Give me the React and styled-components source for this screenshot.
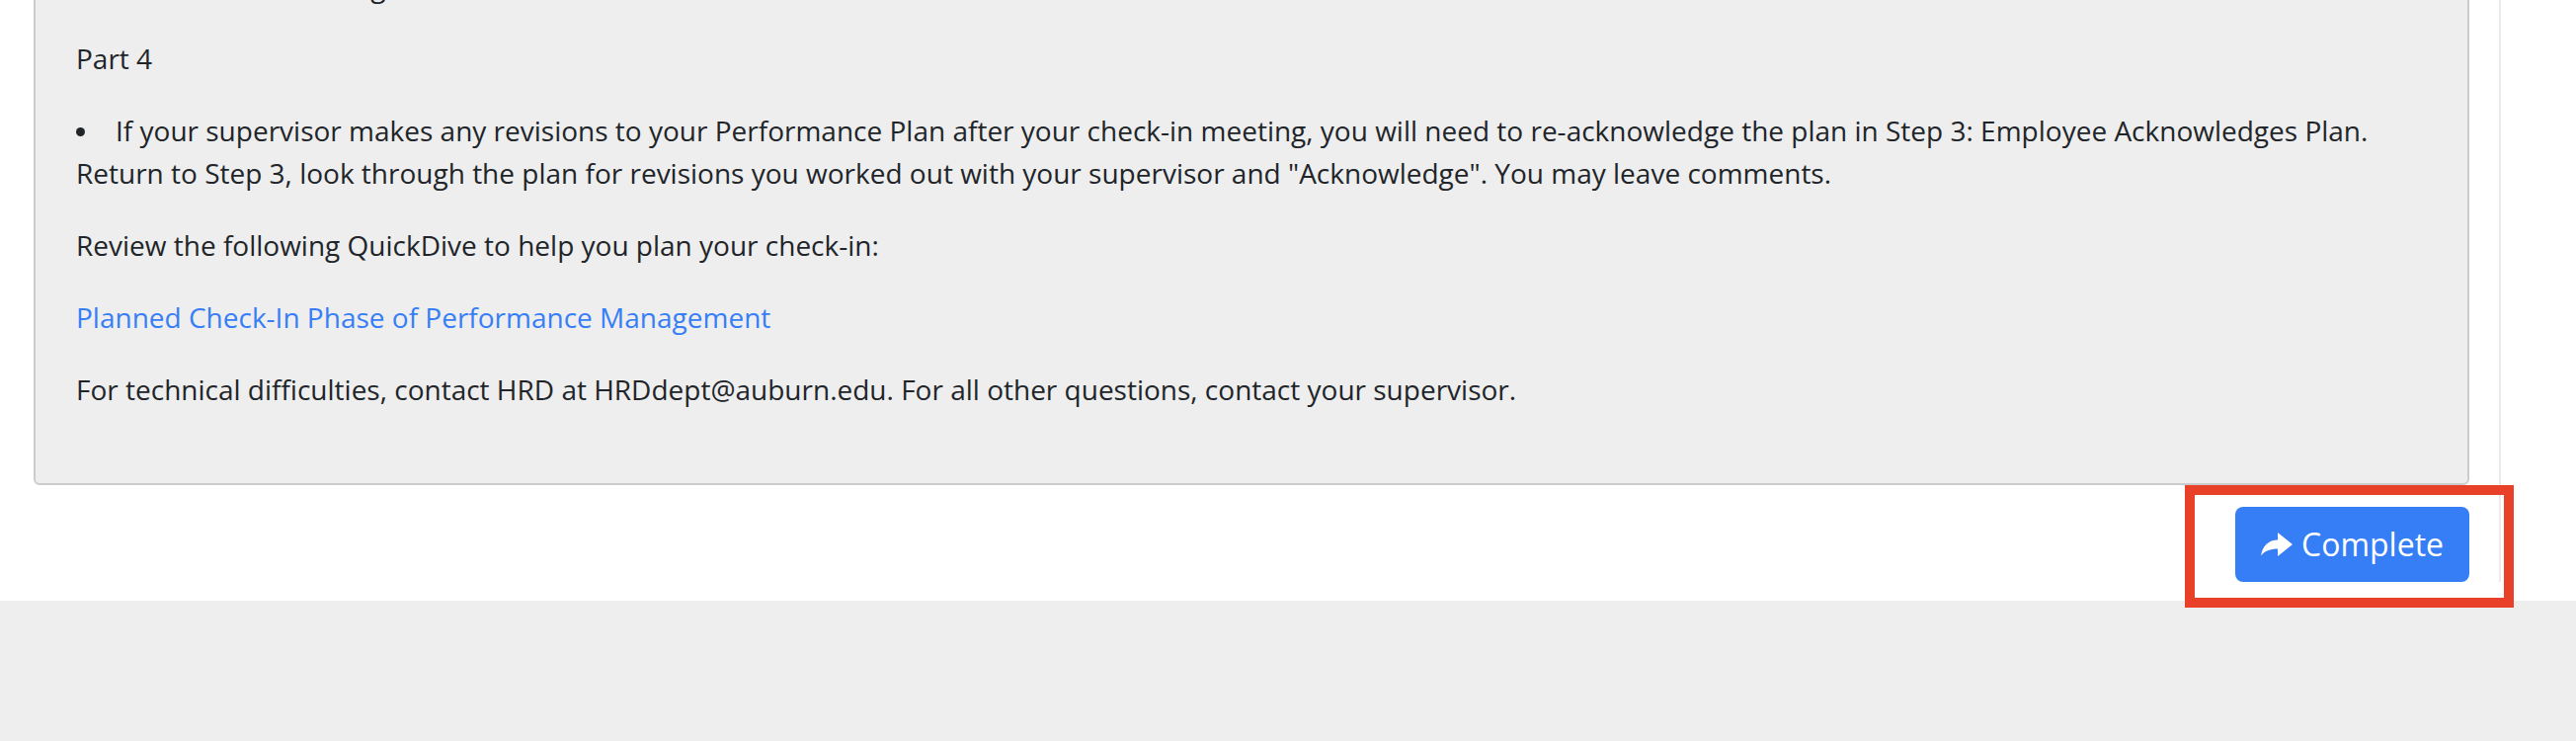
import React from "react";
import styled, { createGlobalStyle } from "styled-components";

const GlobalStyle = createGlobalStyle`
  html, body {
    margin: 0;
    padding: 0;
    background: #ffffff;
  }
  body {
    font-family: "Open Sans", "Noto Sans", sans-serif;
    color: #212529;
  }
`;

const ShareIcon = () => (
  <svg width="32" height="24" viewBox="0 0 32 24" fill="currentColor" aria-hidden="true">
    <path d="M17 0 L32 12 L17 24 V16.5 C9.5 16.5 4 18.5 0 23.5 C1.5 13.5 8 7.5 17 7.5 Z" />
  </svg>
);

const App = () => {
  return (
    <Page>
      <GlobalStyle />
      <Main>
        <Panel>
          <Paragraph>Hold a check-in meeting.</Paragraph>
          <Paragraph>Part 4</Paragraph>
          <Paragraph>
            <Bullet />
            If your supervisor makes any revisions to your Performance Plan after your
            check-in meeting, you will need to re-acknowledge the plan in Step 3: Employee
            Acknowledges Plan. Return to Step 3, look through the plan for revisions you
            worked out with your supervisor and "Acknowledge". You may leave comments.
          </Paragraph>
          <Paragraph>Review the following QuickDive to help you plan your check-in:</Paragraph>
          <Paragraph>
            <Link href="#">Planned Check-In Phase of Performance Management</Link>
          </Paragraph>
          <Paragraph>
            For technical difficulties, contact HRD at HRDdept@auburn.edu. For all other
            questions, contact your supervisor.
          </Paragraph>
        </Panel>
        <Actions>
          <ButtonWrap>
            <CompleteButton type="button">
              <ShareIcon />
              Complete
            </CompleteButton>
            <Highlight />
          </ButtonWrap>
        </Actions>
      </Main>
      <Footer />
    </Page>
  );
};

const Page = styled.div`
  display: flex;
  flex-direction: column;
  min-height: 100vh;
`;

const Main = styled.div`
  box-sizing: border-box;
  width: 2532px;
  margin-top: -77px;
  margin-bottom: 19px;
  padding: 0 30px 0 34px;
  border-right: 2px solid #ebebeb;
`;

const Panel = styled.div`
  background: #eeeeee;
  border: 2px solid #cccccc;
  border-radius: 6px;
  padding: 40px 41px 43px 41px;
`;

const Paragraph = styled.p`
  margin: 0 0 30px;
  font-size: 28px;
  line-height: 43px;
`;

const Bullet = styled.span`
  display: inline-block;
  width: 9px;
  height: 9px;
  margin-right: 31px;
  border-radius: 50%;
  background: #212529;
  vertical-align: 5px;
`;

const Link = styled.a`
  color: #377ef6;
  text-decoration: none;
`;

const Actions = styled.div`
  display: flex;
  justify-content: flex-end;
  margin-top: 22px;
`;

const ButtonWrap = styled.div`
  position: relative;
  display: inline-flex;
`;

const CompleteButton = styled.button`
  display: inline-flex;
  align-items: center;
  gap: 9px;
  height: 76px;
  padding: 0 26px;
  border: none;
  border-radius: 8px;
  background: #357ef5;
  color: #ffffff;
  font-family: "Open Sans", "Noto Sans", sans-serif;
  font-size: 32px;
  line-height: 40px;
  cursor: pointer;
`;

const Highlight = styled.div`
  position: absolute;
  top: -22px;
  left: -51px;
  right: -45px;
  bottom: -26px;
  border: 10px solid #e9402a;
  pointer-events: none;
`;

const Footer = styled.div`
  flex: 1;
  background: #eeeeee;
`;

export default App;
